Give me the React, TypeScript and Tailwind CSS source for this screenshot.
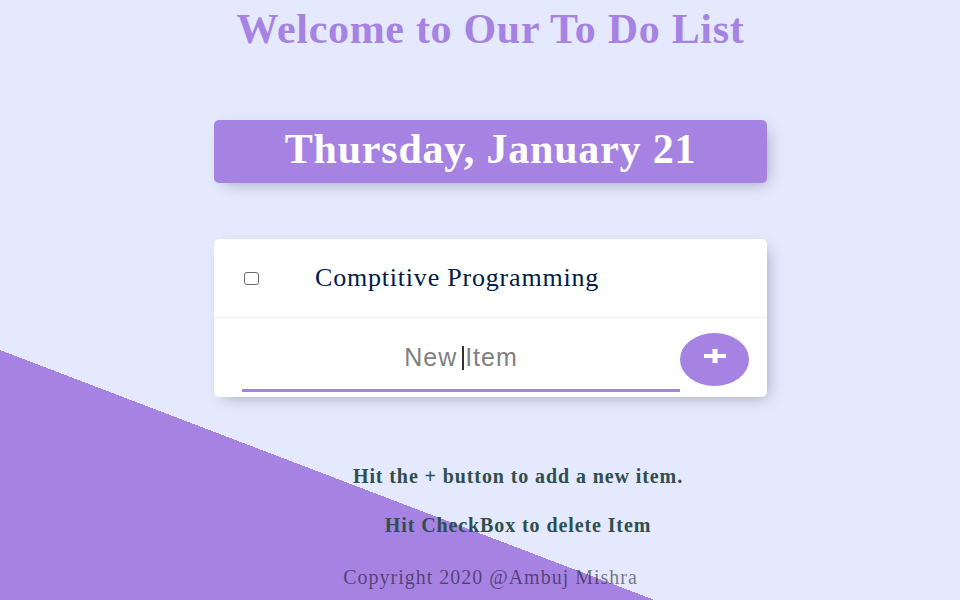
import type { ReactElement } from "react";

interface TodoItem {
  text: string;
}

const items: TodoItem[] = [{ text: "Comptitive Programming" }];

export default function App(): ReactElement {
  return (
    <div className="h-screen w-full overflow-hidden bg-[linear-gradient(20.9deg,#A683E3_233.5px,#E4E9FD_233.5px)] font-['Liberation_Serif',serif]">
      <div className="flex flex-col items-center pl-[21px] pt-[8px]">
        {/* Title */}
        <h1 className="text-[42px] leading-[42px] font-bold tracking-[0.7px] text-[#A683E3]">
          Welcome to Our To Do List
        </h1>

        {/* Date heading */}
        <div className="mt-[70px] h-[63px] w-[553px] rounded-[5px] bg-[#A683E3] pt-[8px] text-center shadow-[5px_5px_15px_-5px_rgba(0,0,0,0.3)]">
          <h2 className="text-[42px] leading-[42px] font-bold tracking-[0.8px] text-white">
            Thursday, January 21
          </h2>
        </div>

        {/* List box */}
        <div className="mt-[56px] w-[553px] rounded-[5px] bg-white shadow-[5px_5px_15px_-5px_rgba(0,0,0,0.3)]">
          {items.map((item, idx) => (
            <div
              key={idx}
              className="flex h-[79px] items-center border-b border-[#F1F1F1]"
            >
              <span className="ml-[30px] h-[13px] w-[15px] rounded-[3px] border-[1.5px] border-[#6b6b6b] bg-white" />
              <p className="ml-[56px] text-[26px] leading-[26px] tracking-[0.8px] text-[#00204a]">
                {item.text}
              </p>
            </div>
          ))}

          {/* New item form */}
          <div className="flex h-[79px] items-end pl-[28px]">
            <div className="relative mb-[5px] h-[60px] w-[438px] pt-[13px] text-center font-['Liberation_Sans',Arial,sans-serif] text-[25px] leading-[25px] tracking-[1px] text-[#808080] shadow-[inset_0_-3px_0_0_#A683E3]">
              New Item
              <span className="absolute left-[220px] top-[14px] h-[24px] w-[2px] bg-[#333]" />
            </div>
            <button className="mb-[11px] flex h-[53px] w-[69px] items-center justify-center rounded-[50%] bg-[#A683E3] pb-[8px]">
              <svg width="22" height="14" viewBox="0 0 22 14" fill="#fff">
                <rect x="0" y="5" width="22" height="4" />
                <rect x="8.5" y="0" width="5" height="14" />
              </svg>
            </button>
          </div>
        </div>

        {/* Footer */}
        <div className="pl-[55px] text-center text-[20px] leading-[24px] font-bold tracking-[0.9px] text-[#2F4F4F]">
          <p className="mt-[67px]">Hit the + button to add a new item.</p>
          <p className="mt-[25px]">Hit CheckBox to delete Item</p>
        </div>
        <footer className="mt-[28px] text-[20px] leading-[24px] tracking-[1px] text-black/50">
          Copyright 2020 @Ambuj Mishra
        </footer>
      </div>
    </div>
  );
}
